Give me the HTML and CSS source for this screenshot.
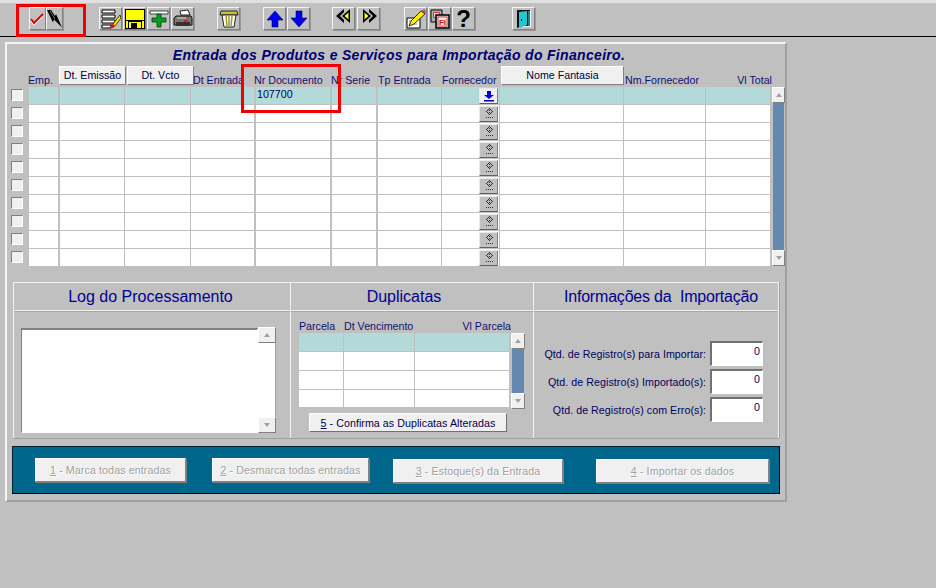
FILE: index.html
```html
<!DOCTYPE html>
<html lang="pt-BR">
<head>
    <meta charset="UTF-8">
    <meta name="viewport" content="width=device-width, initial-scale=1.0">
    <title>Entrada dos Produtos e Serviços para Importação do Financeiro</title>
    <link rel="stylesheet" href="styles.css">
</head>
<body>
    <svg class="defs" width="0" height="0">
        <symbol id="ico-down" viewBox="0 0 14 12">
            <path d="M5 1h4v4h3l-5 4-5-4h3z" fill="#0000e0"/>
            <path d="M2 10h10v1.500H2z" fill="#0000a0"/>
        </symbol>
        <symbol id="ico-diamond" viewBox="0 0 14 14">
            <path shape-rendering="crispEdges" fill="#1818e0" d="M7 1h1v1H7zM6 2h1v1H6zM8 2h1v1H8zM5 3h1v1H5zM7 3h1v1H7zM9 3h1v1H9zM4 4h1v1H4zM10 4h1v1h-1zM7 5h1v1H7zM5 5h1v1H5zM9 5h1v1H9zM6 6h1v1H6zM8 6h1v1H8zM7 7h1v1H7zM4 10h1v1H4zM6 10h1v1H6zM8 10h1v1H8zM10 10h1v1h-1z"/>
        </symbol>
    </svg>

    <div class="toolbar">
        <button class="tool narrow first">
            <svg width="15" height="15" viewBox="0 0 15 15"><path d="M1 8l3 4 9-9" fill="none" stroke="#fff" stroke-width="1.500" transform="translate(0 1.500)"/><path d="M1 8l3 4 9-9" fill="none" stroke="#e00000" stroke-width="2"/></svg>
        </button>
        <button class="tool narrow">
            <svg width="15" height="18" viewBox="0 0 15 18"><path d="M0 0h4l4 6 1-2 6 13.500-8-8-1 3z" fill="#000"/><path d="M3 1l5 8" stroke="#888" stroke-width=".8"/></svg>
        </button>

        <button class="tool gap-list">
            <svg width="20" height="20" viewBox="0 0 20 20"><path d="M1 1h13v3H1zM1 6h13v3H1zM1 11h13v3H1zM1 16h9v3H1z" fill="#fff" stroke="#000"/><path d="M19 6l-7 9-2 4 4-2 6-8z" fill="#f8e800" stroke="#000" stroke-width=".7"/><path d="M8 19l3-5 3 3-2 2z" fill="#d02000"/></svg>
        </button>
        <button class="tool">
            <svg width="20" height="20" viewBox="0 0 20 20"><path d="M0 0h20v20H0z" fill="#000"/><path d="M1 1h18v10H1z" fill="#ffff00"/><path d="M1 12h2v7H1zM17 12h2v7h-2z" fill="#ffff00"/><path d="M4 13h12v6H4z" fill="#ffff00"/><path d="M6 14h6v5H6z" fill="#000"/></svg>
        </button>
        <button class="tool">
            <svg width="20" height="20" viewBox="0 0 20 20"><path d="M1 2h18v3H1z" fill="#fff" stroke="#000" stroke-width=".7"/><path d="M8 5h4v4h5v4h-5v5H8v-5H3V9h5z" fill="#00a020" stroke="#004000" stroke-width=".8"/></svg>
        </button>
        <button class="tool">
            <svg width="20" height="20" viewBox="0 0 20 20"><path d="M7 2l8-1 2 5H8z" fill="#fff" stroke="#222"/><path d="M3 7h15l1 2v7H1V9z" fill="#777" stroke="#111"/><path d="M3 13h14v4H3z" fill="#333"/><path d="M11 11h4v1.500h-4z" fill="#e01010"/><path d="M4 9h9" stroke="#ddd"/></svg>
        </button>

        <button class="tool gap-trash">
            <svg width="20" height="20" viewBox="0 0 20 20"><path d="M2 2h16l1 4H1z" fill="#c8c040" stroke="#222"/><path d="M3 6h14l-2 12H5z" fill="#fff" stroke="#222"/><path d="M7 7l1 10M10 7v10M13 7l-1 10" stroke="#a09820" stroke-width="1.500"/></svg>
        </button>

        <button class="tool gap-nav">
            <svg width="18" height="18" viewBox="0 0 18 18"><path d="M9 1l8 9h-5v7H6v-7H1z" fill="#0000f0" stroke="#000060" stroke-width=".6"/></svg>
        </button>
        <button class="tool">
            <svg width="18" height="18" viewBox="0 0 18 18"><path d="M9 17l8-9h-5V1H6v7H1z" fill="#0000f0" stroke="#000060" stroke-width=".6"/></svg>
        </button>

        <button class="tool gap-prev">
            <svg class="shift-up" width="16" height="16" viewBox="0 0 16 16"><path d="M8 1v3L4 8l4 4v3L0 8z" fill="#000"/><path d="M14 1v14L6 8z" fill="#000"/><path d="M12.500 4.500v7L8.500 8z" fill="#ffff00"/></svg>
        </button>
        <button class="tool gap-next">
            <svg class="shift-up" width="16" height="16" viewBox="0 0 16 16"><path d="M8 1v3l4 4-4 4v3l8-7z" fill="#000"/><path d="M2 1v14l8-7z" fill="#000"/><path d="M3.500 4.500v7l4-3.500z" fill="#ffff00"/></svg>
        </button>

        <button class="tool gap-edit">
            <svg width="20" height="20" viewBox="0 0 20 20"><path d="M1 9h13v10H1z" fill="#fff" stroke="#000"/><path d="M3 12h8M3 15h8" stroke="#888"/><path d="M15 2l4 3-11 10-5 2 2-5z" fill="#f8f000" stroke="#000" stroke-width=".8"/><path d="M15 2l2-1 3 3-1 1z" fill="#e02070"/><path d="M17 1l2 2 1-1-2-2z" fill="#20a040"/></svg>
        </button>
        <button class="tool">
            <svg width="20" height="20" viewBox="0 0 20 20"><path d="M1 1h11v12H1z" fill="#b0b0b0" stroke="#000"/><path d="M3.500 3.500h6v5h-6z" fill="#d8d8d8" stroke="#e03030"/><path d="M6 6h13v13H6z" fill="#c8c8c8" stroke="#000" stroke-width="1.500"/><path d="M8 8h9v9H8z" fill="#eee" stroke="#e03030" stroke-width=".8"/><text class="fi" x="12.500" y="16">FI</text></svg>
        </button>
        <button class="tool">
            <span class="help">?</span>
        </button>

        <button class="tool gap-exit">
            <svg width="20" height="20" viewBox="0 0 20 20"><path d="M3 1h14v17H3z" fill="#fff"/><path d="M3 1h13v16H9l-6 2z" fill="#111"/><path d="M5 3l8-1v14l-8 3z" fill="#20c8d0"/><path d="M14 2h2v15h-2z" fill="#208088"/><path d="M7 10h1v2H7z" fill="#000"/></svg>
        </button>
    </div>

    <div class="panel">
        <h1 class="title">Entrada dos Produtos e Serviços para Importação do Financeiro.</h1>

        <div class="grid-head">
            <span></span>
            <span class="col col-emp">Emp.</span>
            <button class="head-btn">Dt. Emissão</button>
            <button class="head-btn second">Dt. Vcto</button>
            <span class="col col-entrada">Dt Entrada</span>
            <span class="col col-tight">Nr Documento</span>
            <span class="col col-serie">Nr Serie</span>
            <span class="col">Tp Entrada</span>
            <span class="col">Fornecedor</span>
            <button class="head-btn wide">Nome Fantasia</button>
            <span class="col col-nome">Nm.Fornecedor</span>
            <span class="col col-right">Vl Total</span>
        </div>

        <div class="grid-body">
            <div class="rows">
                <div class="row active">
                    <span class="check-cell"><i class="check"></i></span>
                    <span class="cell"></span><span class="cell"></span><span class="cell"></span><span class="cell"></span>
                    <span class="cell doc">107700</span>
                    <span class="cell"></span><span class="cell"></span>
                    <span class="cell lov-cell"><button class="lov light"><svg width="14" height="12"><use href="#ico-down"/></svg></button></span>
                    <span class="cell"></span><span class="cell"></span><span class="cell"></span>
                </div>
                <div class="row">
                    <span class="check-cell"><i class="check"></i></span>
                    <span class="cell"></span><span class="cell"></span><span class="cell"></span><span class="cell"></span><span class="cell"></span><span class="cell"></span><span class="cell"></span>
                    <span class="cell lov-cell"><button class="lov"><svg width="14" height="14"><use href="#ico-diamond"/></svg></button></span>
                    <span class="cell"></span><span class="cell"></span><span class="cell"></span>
                </div>
                <div class="row">
                    <span class="check-cell"><i class="check"></i></span>
                    <span class="cell"></span><span class="cell"></span><span class="cell"></span><span class="cell"></span><span class="cell"></span><span class="cell"></span><span class="cell"></span>
                    <span class="cell lov-cell"><button class="lov"><svg width="14" height="14"><use href="#ico-diamond"/></svg></button></span>
                    <span class="cell"></span><span class="cell"></span><span class="cell"></span>
                </div>
                <div class="row">
                    <span class="check-cell"><i class="check"></i></span>
                    <span class="cell"></span><span class="cell"></span><span class="cell"></span><span class="cell"></span><span class="cell"></span><span class="cell"></span><span class="cell"></span>
                    <span class="cell lov-cell"><button class="lov"><svg width="14" height="14"><use href="#ico-diamond"/></svg></button></span>
                    <span class="cell"></span><span class="cell"></span><span class="cell"></span>
                </div>
                <div class="row">
                    <span class="check-cell"><i class="check"></i></span>
                    <span class="cell"></span><span class="cell"></span><span class="cell"></span><span class="cell"></span><span class="cell"></span><span class="cell"></span><span class="cell"></span>
                    <span class="cell lov-cell"><button class="lov"><svg width="14" height="14"><use href="#ico-diamond"/></svg></button></span>
                    <span class="cell"></span><span class="cell"></span><span class="cell"></span>
                </div>
                <div class="row">
                    <span class="check-cell"><i class="check"></i></span>
                    <span class="cell"></span><span class="cell"></span><span class="cell"></span><span class="cell"></span><span class="cell"></span><span class="cell"></span><span class="cell"></span>
                    <span class="cell lov-cell"><button class="lov"><svg width="14" height="14"><use href="#ico-diamond"/></svg></button></span>
                    <span class="cell"></span><span class="cell"></span><span class="cell"></span>
                </div>
                <div class="row">
                    <span class="check-cell"><i class="check"></i></span>
                    <span class="cell"></span><span class="cell"></span><span class="cell"></span><span class="cell"></span><span class="cell"></span><span class="cell"></span><span class="cell"></span>
                    <span class="cell lov-cell"><button class="lov"><svg width="14" height="14"><use href="#ico-diamond"/></svg></button></span>
                    <span class="cell"></span><span class="cell"></span><span class="cell"></span>
                </div>
                <div class="row">
                    <span class="check-cell"><i class="check"></i></span>
                    <span class="cell"></span><span class="cell"></span><span class="cell"></span><span class="cell"></span><span class="cell"></span><span class="cell"></span><span class="cell"></span>
                    <span class="cell lov-cell"><button class="lov"><svg width="14" height="14"><use href="#ico-diamond"/></svg></button></span>
                    <span class="cell"></span><span class="cell"></span><span class="cell"></span>
                </div>
                <div class="row">
                    <span class="check-cell"><i class="check"></i></span>
                    <span class="cell"></span><span class="cell"></span><span class="cell"></span><span class="cell"></span><span class="cell"></span><span class="cell"></span><span class="cell"></span>
                    <span class="cell lov-cell"><button class="lov"><svg width="14" height="14"><use href="#ico-diamond"/></svg></button></span>
                    <span class="cell"></span><span class="cell"></span><span class="cell"></span>
                </div>
                <div class="row">
                    <span class="check-cell"><i class="check"></i></span>
                    <span class="cell"></span><span class="cell"></span><span class="cell"></span><span class="cell"></span><span class="cell"></span><span class="cell"></span><span class="cell"></span>
                    <span class="cell lov-cell"><button class="lov"><svg width="14" height="14"><use href="#ico-diamond"/></svg></button></span>
                    <span class="cell"></span><span class="cell"></span><span class="cell"></span>
                </div>
            </div>
            <div class="scroll main-scroll">
                <span class="scroll-btn"><i class="arrow-up"></i></span>
                <span class="scroll-thumb"></span>
                <span class="scroll-btn"><i class="arrow-down"></i></span>
            </div>
        </div>

        <div class="sections">
            <section class="section">
                <h2 class="section-title title-log">Log do Processamento</h2>
                <div class="section-body log-body">
                    <div class="log-text"></div>
                    <div class="scroll log-scroll">
                        <span class="scroll-btn"><i class="arrow-up"></i></span>
                        <span class="scroll-track"></span>
                        <span class="scroll-btn"><i class="arrow-down"></i></span>
                    </div>
                </div>
            </section>

            <section class="section">
                <h2 class="section-title title-dup">Duplicatas</h2>
                <div class="section-body dup-body">
                    <div class="dup-head">
                        <span class="col">Parcela</span>
                        <span class="col">Dt Vencimento</span>
                        <span class="col col-right">Vl Parcela</span>
                    </div>
                    <div class="dup-table">
                        <div class="dup-rows">
                            <div class="dup-row active"><span class="cell"></span><span class="cell"></span><span class="cell"></span></div>
                            <div class="dup-row"><span class="cell"></span><span class="cell"></span><span class="cell"></span></div>
                            <div class="dup-row"><span class="cell"></span><span class="cell"></span><span class="cell"></span></div>
                            <div class="dup-row"><span class="cell"></span><span class="cell"></span><span class="cell"></span></div>
                        </div>
                        <div class="scroll dup-scroll">
                            <span class="scroll-btn"><i class="arrow-up"></i></span>
                            <span class="scroll-thumb"></span>
                            <span class="scroll-btn"><i class="arrow-down"></i></span>
                        </div>
                    </div>
                    <button class="dup-btn"><u>5</u> - Confirma as Duplicatas Alteradas</button>
                </div>
            </section>

            <section class="section">
                <h2 class="section-title title-info">Informações da&nbsp; Importação</h2>
                <div class="section-body info-body">
                    <div class="info-row"><label>Qtd. de Registro(s) para Importar:</label><span class="info-value">0</span></div>
                    <div class="info-row"><label>Qtd. de Registro(s) Importado(s):</label><span class="info-value">0</span></div>
                    <div class="info-row"><label>Qtd. de Registro(s) com Erro(s):</label><span class="info-value">0</span></div>
                </div>
            </section>
        </div>

        <div class="actions">
            <button class="action a1" disabled><u>1</u> - Marca todas entradas</button>
            <button class="action a2" disabled><u>2</u> - Desmarca todas entradas</button>
            <button class="action a3" disabled><u>3</u> - Estoque(s) da Entrada</button>
            <button class="action a4" disabled><u>4</u> - Importar os dados</button>
        </div>
    </div>

    <!-- marcacoes vermelhas feitas por cima do print -->
    <div class="mark mark-tools"></div>
    <div class="mark mark-doc"></div>
</body>
</html>
```

FILE: styles.css
```css
body {
    margin: 0;
    height: 588px;
    position: relative;
    overflow: hidden;
    background-color: #c0c0c0;
    font-family: "Liberation Sans", Arial, sans-serif;
    font-size: 10.67px;
    color: #000060;
}
button {
    font-family: inherit;
    font-size: inherit;
    padding: 0;
    box-sizing: border-box;
}
.defs {
    position: absolute;
}

/* toolbar */
.toolbar {
    display: flex;
    align-items: flex-start;
    box-sizing: border-box;
    height: 37px;
    padding: 4px 0 0 29px;
    border-top: 3px solid #e0e0e0;
    border-bottom: 1px solid #000;
}
.tool {
    display: flex;
    align-items: center;
    justify-content: center;
    flex: none;
    width: 23px;
    height: 23px;
    margin-left: 1px;
    background-color: #c0c0c0;
    border: 1px solid;
    border-color: #f4f4f4 #808080 #808080 #f4f4f4;
    box-shadow: 1px 1px 0 #999;
}
.tool.narrow {
    width: 17px;
    margin-left: 0;
}
.tool.first {
    margin-left: 0;
}
.gap-list { margin-left: 36px; }
.gap-trash { margin-left: 23px; }
.gap-nav { margin-left: 23px; }
.gap-prev { margin-left: 22px; }
.gap-next { margin-left: 2px; }
.gap-edit { margin-left: 24px; }
.gap-exit { margin-left: 37px; }
.shift-up {
    margin-top: -5px;
}
.help {
    font: bold 24px "Liberation Sans", sans-serif;
    color: #000;
    line-height: 20px;
}
.fi {
    font: bold 8px "Liberation Sans", sans-serif;
    fill: #d01010;
    text-anchor: middle;
}

/* painel principal */
.panel {
    box-sizing: border-box;
    width: 782px;
    height: 460px;
    margin: 5px 0 0 5px;
    border: 2px solid;
    border-color: #f4f4f4 #a0a0a0 #a0a0a0 #f4f4f4;
}
.title {
    margin: 0;
    height: 22px;
    line-height: 22px;
    text-align: center;
    font-size: 14px;
    font-style: italic;
    font-weight: bold;
    color: #000070;
    padding-left: 6px;
    letter-spacing: .32px;
    white-space: nowrap;
}
.grid-head, .row {
    display: grid;
    grid-template-columns: 22px 31px 65px 66px 65px 76px 46px 64px 58px 124px 82px 65px;
}
.grid-head {
    height: 21px;
    align-items: end;
}
.col {
    white-space: nowrap;
    line-height: 14px;
    color: #101070;
}
.col-emp {
    margin-left: -1px;
}
.col-tight {
    margin-left: -2px;
}
.col-entrada {
    margin-left: 2px;
}
.col-serie {
    margin-left: -1px;
}
.col-nome {
    margin-left: 1px;
}
.col-right {
    text-align: right;
    margin-right: -1px;
}
.head-btn {
    width: 67px;
    height: 19px;
    margin: 0 0 2px -1px;
    align-self: start;
    background-color: #f0f0f0;
    color: #000040;
    border: 1px solid;
    border-color: #fff #808080 #808080 #fff;
    padding-bottom: 2px;
}
.head-btn.second {
    margin-left: 2px;
}
.head-btn.wide {
    width: 123px;
    margin-left: 1px;
}

.grid-body {
    display: flex;
}
.rows {
    width: 764px;
}
.row {
    height: 18px;
}
.check-cell {
    display: block;
    padding: 2px 0 0 4px;
}
.check {
    display: block;
    box-sizing: border-box;
    width: 12px;
    height: 12px;
    background-color: #f0f0f0;
    border: 1px solid;
    border-color: #808080 #fff #fff #808080;
}
.cell {
    display: block;
    background-color: #fff;
    border-right: 1px solid #c0c0c0;
    border-bottom: 1px solid #c0c0c0;
}
.row .cell:nth-child(2),
.row .cell:nth-child(5),
.row .cell:nth-child(6),
.row .cell:nth-child(7) {
    border-right-width: 2px;
}
.active .cell {
    background-color: #b4d9d9;
}
.doc {
    padding-left: 1px;
    line-height: 15px;
    color: #000060;
}
.lov-cell {
    display: flex;
    justify-content: flex-end;
    align-items: flex-start;
    padding-top: 1px;
}
.lov {
    display: flex;
    align-items: center;
    justify-content: center;
    width: 19px;
    height: 16px;
    margin-right: 1px;
    background-color: #c0c0c0;
    border: 1px solid;
    border-color: #e8e8e8 #808080 #606060 #e8e8e8;
}
.lov.light {
    background-color: #f0f0f0;
}

/* barras de rolagem */
.scroll {
    display: flex;
    flex-direction: column;
    flex: none;
}
.main-scroll {
    width: 13px;
    height: 179px;
    margin-left: 1px;
}
.scroll-btn {
    display: flex;
    align-items: center;
    justify-content: center;
    flex: none;
    box-sizing: border-box;
    height: 16px;
    background-color: #f0f0f0;
    border: 1px solid;
    border-color: #fff #808080 #808080 #fff;
}
.scroll-thumb {
    flex: 1;
    background-color: #6488b0;
    margin: 0 1px;
}
.scroll-track {
    flex: 1;
    background-color: #fff;
    border-right: 1px solid #a0a0a0;
}
.arrow-up, .arrow-down {
    width: 0;
    height: 0;
    border-left: 3px solid transparent;
    border-right: 3px solid transparent;
}
.arrow-up {
    border-bottom: 4px solid #a0a0a0;
}
.arrow-down {
    border-top: 4px solid #a0a0a0;
}

/* secoes de baixo */
.sections {
    display: grid;
    grid-template-columns: 277px 243px 246px;
    width: 766px;
    height: 156px;
    margin: 15px 0 0 6px;
    box-shadow: 0 1px 0 #a0a0a0, 1px 0 0 #a0a0a0;
}
.section {
    display: flex;
    flex-direction: column;
    border-left: 1px solid #f0f0f0;
    border-top: 1px solid #f0f0f0;
}
.section:last-child {
    border-right: 1px solid #f0f0f0;
}
.section-title {
    margin: 0;
    flex: none;
    height: 27px;
    line-height: 28px;
    text-align: center;
    font-size: 16px;
    font-weight: normal;
    color: #000090;
    border-bottom: 1px solid #f0f0f0;
    box-shadow: 0 1px 0 #a8a8a8;
}
.title-log {
    padding-right: 3px;
}
.title-dup {
    padding-right: 16px;
}
.title-info {
    padding-left: 10px;
    letter-spacing: -.2px;
}
.section-body {
    flex: 1;
    box-sizing: border-box;
}
.log-body {
    display: flex;
    align-items: flex-start;
    padding: 17px 0 0 7px;
}
.log-text {
    box-sizing: border-box;
    width: 237px;
    height: 105px;
    background-color: #fff;
    border: 1px solid;
    border-color: #808080 #fff #fff #808080;
    border-width: 2px 1px 1px 1px;
}
.log-scroll {
    width: 18px;
    height: 106px;
    margin-top: -1px;
}
.dup-body {
    padding: 8px 0 0 8px;
}
.dup-head, .dup-row {
    display: grid;
    grid-template-columns: 45px 71px 95px;
}
.dup-head {
    height: 14px;
    width: 213px;
    line-height: 13px;
    align-items: start;
}
.dup-table {
    display: flex;
}
.dup-row {
    height: 19px;
}
.dup-row:last-child {
    height: 18px;
}
.dup-rows {
    width: 211px;
}
.dup-scroll {
    width: 14px;
    height: 76px;
    margin-left: 1px;
}
.dup-btn {
    display: block;
    width: 198px;
    height: 19px;
    margin: 4px 0 0 10px;
    background-color: #f0f0f0;
    color: #000050;
    border: 1px solid;
    border-color: #fff #707070 #707070 #fff;
    letter-spacing: .05px;
}
.info-body {
    padding-top: 30px;
}
.info-row {
    display: flex;
    align-items: center;
    justify-content: flex-end;
    height: 25px;
    margin: 0 15px 3px 0;
}
.info-row label {
    margin-right: 4px;
    white-space: nowrap;
    letter-spacing: .05px;
}
.info-value {
    box-sizing: border-box;
    width: 53px;
    height: 25px;
    padding: 2px 2px 0 0;
    text-align: right;
    background-color: #fff;
    border: 1px solid;
    border-color: #707070 #fff #fff #707070;
    border-width: 2px 1px 1px 2px;
}

/* barra de acoes */
.actions {
    display: flex;
    align-items: center;
    box-sizing: border-box;
    width: 768px;
    height: 48px;
    margin: 8px 0 0 5px;
    background-color: #00668c;
    border: 1px solid;
    border-color: #00202c #000 #000 #00202c;
}
.action {
    height: 24px;
    background-color: #f0f0f0;
    color: #a0a0a0;
    border: 1px solid;
    border-color: #fff #808080 #808080 #fff;
    box-shadow: 1px 1px 0 #808080;
    text-shadow: 1px 1px 0 #fff;
    letter-spacing: .1px;
}
.a1 { width: 151px; margin-left: 22px; }
.a2 { width: 157px; margin-left: 26px; }
.a3 { width: 170px; margin: 2px 0 0 24px; }
.a4 { width: 173px; margin: 2px 0 0 33px; }

/* retangulos vermelhos */
.mark {
    position: absolute;
    box-sizing: border-box;
    border: 3px solid #f00000;
}
.mark-tools {
    left: 16px;
    top: 4px;
    width: 70px;
    height: 33px;
}
.mark-doc {
    left: 241px;
    top: 64px;
    width: 100px;
    height: 49px;
}
```
